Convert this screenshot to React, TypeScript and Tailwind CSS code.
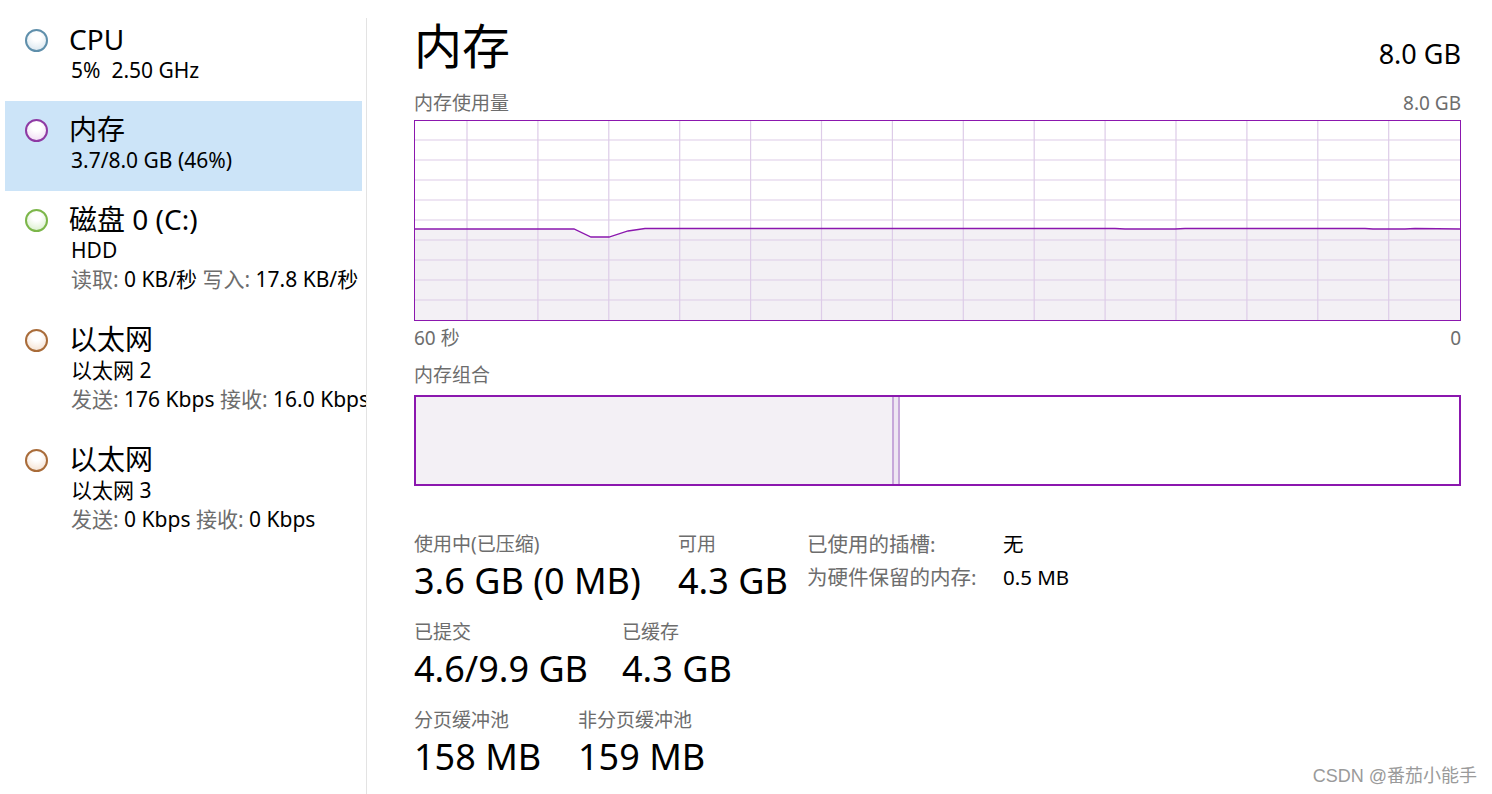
import React from 'react';

interface SideItem {
  title: string;
  lines: { label?: string; value: string }[][];
  ring: string;
  fill: string;
  selected?: boolean;
}

const items: SideItem[] = [
  {
    title: 'CPU',
    lines: [[{ value: '5%\u00a0 2.50 GHz' }]],
    ring: 'border-[#5f8fab]',
    fill: 'bg-[radial-gradient(circle_at_50%_30%,#ffffff_25%,#d3e2ec)]',
  },
  {
    title: '内存',
    lines: [[{ value: '3.7/8.0 GB (46%)' }]],
    ring: 'border-[#8e3aa3]',
    fill: 'bg-[radial-gradient(circle_at_50%_30%,#ffffff_25%,#eed6f2)]',
    selected: true,
  },
  {
    title: '磁盘 0 (C:)',
    lines: [
      [{ value: 'HDD' }],
      [
        { label: '读取: ', value: '0 KB/秒' },
        { label: ' 写入: ', value: '17.8 KB/秒' },
      ],
    ],
    ring: 'border-[#7cb64a]',
    fill: 'bg-[radial-gradient(circle_at_50%_30%,#ffffff_25%,#d4edc4)]',
  },
  {
    title: '以太网',
    lines: [
      [{ value: '以太网 2' }],
      [
        { label: '发送: ', value: '176 Kbps' },
        { label: ' 接收: ', value: '16.0 Kbps' },
      ],
    ],
    ring: 'border-[#a96c3a]',
    fill: 'bg-[radial-gradient(circle_at_50%_30%,#ffffff_25%,#f3dcc9)]',
  },
  {
    title: '以太网',
    lines: [
      [{ value: '以太网 3' }],
      [
        { label: '发送: ', value: '0 Kbps' },
        { label: ' 接收: ', value: '0 Kbps' },
      ],
    ],
    ring: 'border-[#a96c3a]',
    fill: 'bg-[radial-gradient(circle_at_50%_30%,#ffffff_25%,#f3dcc9)]',
  },
];

function Sidebar() {
  return (
    <div className="w-[366px] shrink-0 overflow-hidden pt-[11px]">
      {items.map((item, i) => (
        <div
          key={i}
          className={`ml-[5px] w-[357px] whitespace-nowrap pt-[12px] ${
            item.lines.length > 1 ? 'pb-[17px]' : 'pb-[16px]'
          } ${item.selected ? 'bg-[#cce4f8]' : ''}`}
        >
          <div className="flex h-[32px] items-center">
            <div className="flex w-[64px] justify-start pl-[20px]">
              <div className={`mt-[3px] h-[23px] w-[23px] rounded-full border-2 ${item.ring} ${item.fill}`} />
            </div>
            <div className="text-[28px] leading-[32px] text-black">{item.title}</div>
          </div>
          {item.lines.map((line, j) => (
            <div
              key={j}
              className={`pl-[66px] text-[21px] text-black ${j === 0 ? 'leading-[30px]' : 'leading-[29px]'}`}
            >
              {line.map((part, k) => (
                <span key={k}>
                  {part.label && <span className="text-[#6d6d6d]">{part.label}</span>}
                  {part.value}
                </span>
              ))}
            </div>
          ))}
        </div>
      ))}
    </div>
  );
}

function UsageChart() {
  const w = 1045;
  const h = 199;
  const vLines = Array.from({ length: 14 }, (_, i) => 52 + i * 70.9);
  const hLines = Array.from({ length: 9 }, (_, i) => 19 + i * 20);
  const pts: [number, number][] = [
    [0, 108],
    [159, 108],
    [176, 116],
    [194, 116],
    [213, 110],
    [230, 107.5],
    [700, 107.5],
    [710, 108],
    [760, 108],
    [770, 107.5],
    [950, 107.5],
    [958, 108],
    [990, 108],
    [1000, 107.5],
    [1045, 108],
  ];
  const line = pts.map((p) => `${p[0]},${p[1]}`).join(' ');
  const area = `0,${h} ${line} ${w},${h}`;

  return (
    <div className="h-[201px] w-full border border-[#8b17ae]">
      <svg width="100%" height="100%" viewBox={`0 0 ${w} ${h}`} preserveAspectRatio="none">
        <polygon points={area} fill="#f3f0f5" />
        {vLines.map((x) => (
          <line key={`v${x}`} x1={x} y1={0} x2={x} y2={h} stroke="#ddcce8" strokeWidth={1.2} />
        ))}
        {hLines.map((y) => (
          <line key={`h${y}`} x1={0} y1={y} x2={w} y2={y} stroke="#ddcce8" strokeWidth={1.2} />
        ))}
        <polyline points={line} fill="none" stroke="#8b17ae" strokeWidth={1.3} />
      </svg>
    </div>
  );
}

function Stat({ label, value, width }: { label: string; value: string; width: string }) {
  return (
    <div className={`${width} shrink-0`}>
      <div className="text-[19px] leading-[24px] text-[#6d6d6d]">{label}</div>
      <div className="mt-[3px] text-[36px] leading-[44px] text-black">{value}</div>
    </div>
  );
}

export default function App() {
  return (
    <div
      className="relative flex h-[794px] w-[1492px] overflow-hidden bg-white"
      style={{ fontFamily: '"Noto Sans", "Noto Sans CJK SC", sans-serif' }}
    >
      <Sidebar />
      <div className="mt-[18px] w-px shrink-0 bg-[#e3e3e3]" />

      <div className="ml-[47px] w-[1047px] shrink-0">
        {/* Header */}
        <div className="flex h-[91px] items-baseline justify-between pt-[14px]">
          <div className="text-[48px] leading-[64px] text-black">内存</div>
          <div className="text-[27px] leading-[40px] text-black">8.0 GB</div>
        </div>

        <div className="flex justify-between text-[19px] leading-[24px] text-[#6d6d6d]">
          <span>内存使用量</span>
          <span>8.0 GB</span>
        </div>

        <div className="mt-[5px]">
          <UsageChart />
        </div>

        <div className="mt-[5px] flex justify-between text-[19px] leading-[24px] text-[#6d6d6d]">
          <span>60 秒</span>
          <span>0</span>
        </div>

        <div className="mt-[13px] text-[19px] leading-[24px] text-[#6d6d6d]">内存组合</div>

        <div className="mt-[8px] flex h-[91px] border-2 border-[#8b17ae]">
          <div className="w-[476px] bg-[#f3f0f5]" />
          <div className="w-[8px] border-x-2 border-[#c7a8da] bg-[#eee6f2]" />
          <div className="flex-1 bg-white" />
        </div>

        {/* Stats */}
        <div className="mt-[46px] flex items-start">
          <Stat label="使用中(已压缩)" value="3.6 GB (0 MB)" width="w-[264px]" />
          <Stat label="可用" value="4.3 GB" width="w-[129px]" />
          <div className="grid grid-cols-[196px_auto] content-start gap-y-[9px] text-[20.5px] leading-[24px]">
            <span className="text-[#6d6d6d]">已使用的插槽:</span>
            <span className="text-black">无</span>
            <span className="text-[#6d6d6d]">为硬件保留的内存:</span>
            <span className="text-black">0.5 MB</span>
          </div>
        </div>

        <div className="mt-[17px] flex">
          <Stat label="已提交" value="4.6/9.9 GB" width="w-[208px]" />
          <Stat label="已缓存" value="4.3 GB" width="w-[160px]" />
        </div>

        <div className="mt-[17px] flex">
          <Stat label="分页缓冲池" value="158 MB" width="w-[164px]" />
          <Stat label="非分页缓冲池" value="159 MB" width="w-[160px]" />
        </div>
      </div>

      <div
        className="absolute bottom-[8px] right-[15px] text-[18px] leading-[20px] text-[#9a9a9a]"
        style={{ fontFamily: '"Liberation Sans", "Noto Sans CJK SC", sans-serif' }}
      >
        CSDN @番茄小能手
      </div>
    </div>
  );
}
